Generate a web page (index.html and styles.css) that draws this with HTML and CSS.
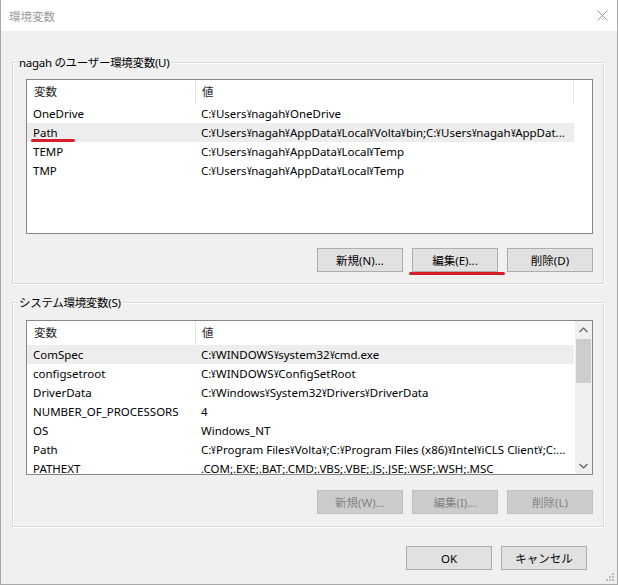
FILE: index.html
```html
<!DOCTYPE html>
<html lang="ja">
<head>
<meta charset="utf-8">
<title>環境変数</title>
<link rel="stylesheet" href="styles.css">
</head>
<body>
<div class="window">
  <div class="titlebar">
    <span class="title">環境変数</span>
    <svg class="close" width="11" height="11" viewBox="0 0 11 11"><path d="M0.5 0.5 L10.5 10.5 M10.5 0.5 L0.5 10.5" stroke="#9a9a9a" stroke-width="1" fill="none"/></svg>
  </div>
  <div class="body">
    <fieldset class="group group-user">
      <legend>nagah のユーザー環境変数(U)</legend>
      <div class="list">
        <div class="lv-head">
          <div class="c1">変数</div>
          <div class="c2">値</div>
        </div>
        <div class="row"><div class="c1">OneDrive</div><div class="c2">C:<span class="y">¥</span>Users<span class="y">¥</span>nagah<span class="y">¥</span>OneDrive</div></div>
        <div class="row sel"><div class="c1 marked">Path</div><div class="c2">C:<span class="y">¥</span>Users<span class="y">¥</span>nagah<span class="y">¥</span>AppData<span class="y">¥</span>Local<span class="y">¥</span>Volta<span class="y">¥</span>bin;C:<span class="y">¥</span>Users<span class="y">¥</span>nagah<span class="y">¥</span>AppDat...</div></div>
        <div class="row"><div class="c1">TEMP</div><div class="c2">C:<span class="y">¥</span>Users<span class="y">¥</span>nagah<span class="y">¥</span>AppData<span class="y">¥</span>Local<span class="y">¥</span>Temp</div></div>
        <div class="row"><div class="c1">TMP</div><div class="c2">C:<span class="y">¥</span>Users<span class="y">¥</span>nagah<span class="y">¥</span>AppData<span class="y">¥</span>Local<span class="y">¥</span>Temp</div></div>
      </div>
      <div class="btns">
        <button class="btn">新規(N)...</button>
        <button class="btn marked-btn">編集(E)...</button>
        <button class="btn">削除(D)</button>
      </div>
    </fieldset>

    <fieldset class="group group-sys">
      <legend>システム環境変数(S)</legend>
      <div class="list sys">
        <div class="rows">
          <div class="lv-head">
            <div class="c1">変数</div>
            <div class="c2 nosep">値</div>
          </div>
          <div class="row sel"><div class="c1">ComSpec</div><div class="c2">C:<span class="y">¥</span>WINDOWS<span class="y">¥</span>system32<span class="y">¥</span>cmd.exe</div></div>
          <div class="row"><div class="c1">configsetroot</div><div class="c2">C:<span class="y">¥</span>WINDOWS<span class="y">¥</span>ConfigSetRoot</div></div>
          <div class="row"><div class="c1">DriverData</div><div class="c2">C:<span class="y">¥</span>Windows<span class="y">¥</span>System32<span class="y">¥</span>Drivers<span class="y">¥</span>DriverData</div></div>
          <div class="row"><div class="c1">NUMBER_OF_PROCESSORS</div><div class="c2">4</div></div>
          <div class="row"><div class="c1">OS</div><div class="c2">Windows_NT</div></div>
          <div class="row"><div class="c1">Path</div><div class="c2">C:<span class="y">¥</span>Program Files<span class="y">¥</span>Volta<span class="y">¥</span>;C:<span class="y">¥</span>Program Files (x86)<span class="y">¥</span>Intel<span class="y">¥</span>iCLS Client<span class="y">¥</span>;C:...</div></div>
          <div class="row"><div class="c1">PATHEXT</div><div class="c2">.COM;.EXE;.BAT;.CMD;.VBS;.VBE;.JS;.JSE;.WSF;.WSH;.MSC</div></div>
        </div>
        <div class="vscroll">
          <div class="arrow"><svg width="9" height="6" viewBox="0 0 9 6"><polyline points="0.5,5 4.5,1 8.5,5" fill="none" stroke="#606060" stroke-width="1.2"/></svg></div>
          <div class="track"><div class="thumb"></div></div>
          <div class="arrow"><svg width="9" height="6" viewBox="0 0 9 6"><polyline points="0.5,1 4.5,5 8.5,1" fill="none" stroke="#606060" stroke-width="1.2"/></svg></div>
        </div>
      </div>
      <div class="btns btns-sys">
        <button class="btn" disabled>新規(W)...</button>
        <button class="btn" disabled>編集(I)...</button>
        <button class="btn" disabled>削除(L)</button>
      </div>
    </fieldset>

    <div class="footer">
      <button class="btn">OK</button>
      <button class="btn">キャンセル</button>
    </div>
  </div>
  <svg class="grip" width="8" height="8" viewBox="0 0 8 8">
    <rect x="6" y="0" width="2" height="2" fill="#bdbdbd"/>
    <rect x="3" y="3" width="2" height="2" fill="#bdbdbd"/>
    <rect x="6" y="3" width="2" height="2" fill="#bdbdbd"/>
    <rect x="0" y="6" width="2" height="2" fill="#bdbdbd"/>
    <rect x="3" y="6" width="2" height="2" fill="#bdbdbd"/>
    <rect x="6" y="6" width="2" height="2" fill="#bdbdbd"/>
  </svg>
</div>
</body>
</html>
```

FILE: styles.css
```css
html, body {
  margin: 0;
  padding: 0;
  background: #ffffff;
}

.window {
  position: relative;
  width: 618px;
  height: 585px;
  box-sizing: border-box;
  border: 1px solid #a8a8a8;
  border-top: none;
  background: #f0f0f0;
  display: flex;
  flex-direction: column;
  font-family: "Noto Sans", "Noto Sans CJK JP", sans-serif;
  font-size: 11.5px;
  color: #000;
}

.titlebar {
  height: 31px;
  flex: none;
  background: #ffffff;
  display: flex;
  align-items: center;
  justify-content: space-between;
  padding: 0 9px 0 8px;
}

.title {
  color: #9a9a9a;
  font-size: 11.5px;
}

.close {
  display: block;
}

.body {
  flex: 1;
  display: flex;
  flex-direction: column;
  padding: 0 13px 0 11px;
}

.group {
  margin: 0;
  min-width: 0;
  border: 1px solid #d9d9d9;
  box-shadow: inset 1px 1px 0 #ffffff, 1px 1px 0 #ffffff;
}

.group legend {
  margin-left: -9px;
  padding: 0 2px;
  line-height: 17px;
  letter-spacing: -0.3px;
  background: #f0f0f0;
  color: #000;
}

.group-user {
  margin-top: 23px;
  padding: 8px 10px 11px 13px;
}

.group-sys {
  margin-top: 10px;
  padding: 9px 10px 12px 13px;
}

.list {
  height: 155px;
  box-sizing: border-box;
  border: 1px solid #828790;
  background: #ffffff;
  overflow: hidden;
}

.list.sys {
  display: flex;
}

.rows {
  flex: 1;
  min-width: 0;
}

.lv-head {
  display: flex;
  height: 24px;
  line-height: 24px;
  color: #1e1e1e;
}

.lv-head .c1 {
  width: 169px;
  flex: none;
  box-sizing: border-box;
  padding-left: 7px;
  border-right: 1px solid #e5e5e5;
}

.lv-head .c2 {
  width: 378px;
  flex: none;
  box-sizing: border-box;
  padding-left: 6px;
  border-right: 1px solid #e5e5e5;
}

.lv-head .c2.nosep {
  border-right: none;
}

.row {
  display: flex;
  width: 547px;
  height: 19px;
  line-height: 19px;
  white-space: nowrap;
}

.row.sel {
  background: #ededed;
}

.row .c1 {
  width: 169px;
  flex: none;
  box-sizing: border-box;
  padding-left: 6px;
  position: relative;
}

.row .c2 {
  flex: 1;
  box-sizing: border-box;
  padding-left: 5px;
}

.y {
  display: inline-block;
  width: 4.6px;
  transform: scaleX(0.72);
  transform-origin: left center;
}

.c1.marked::after {
  content: "";
  position: absolute;
  left: 4px;
  top: 16px;
  width: 44px;
  height: 3px;
  border-radius: 2px;
  background: #d3202a;
}

.vscroll {
  width: 17px;
  flex: none;
  background: #f0f0f0;
  display: flex;
  flex-direction: column;
}

.arrow {
  height: 17px;
  flex: none;
  display: flex;
  align-items: center;
  justify-content: center;
}

.arrow svg {
  display: block;
}

.track {
  flex: 1;
  padding: 1px 1px 0;
}

.thumb {
  height: 44px;
  background: #cdcdcd;
}

.btns {
  display: flex;
  justify-content: flex-end;
  gap: 9px;
  margin-top: 14px;
}

.btns-sys {
  margin-top: 15px;
}

.btn {
  width: 86px;
  height: 24px;
  box-sizing: border-box;
  border: 1px solid #adadad;
  background: #e1e1e1;
  color: #000;
  font-family: inherit;
  font-size: 11.5px;
  padding: 0;
  margin: 0;
  position: relative;
}

.btn:disabled {
  background: #cccccc;
  border-color: #bfbfbf;
  color: #838383;
}

.marked-btn::after {
  content: "";
  position: absolute;
  left: -4px;
  top: 23px;
  width: 96px;
  height: 3px;
  border-radius: 2px;
  background: #d3202a;
}

.footer {
  display: flex;
  justify-content: flex-end;
  gap: 9px;
  margin-top: 19px;
  margin-right: 17px;
}

.grip {
  position: absolute;
  right: 3px;
  bottom: 3px;
}
```
